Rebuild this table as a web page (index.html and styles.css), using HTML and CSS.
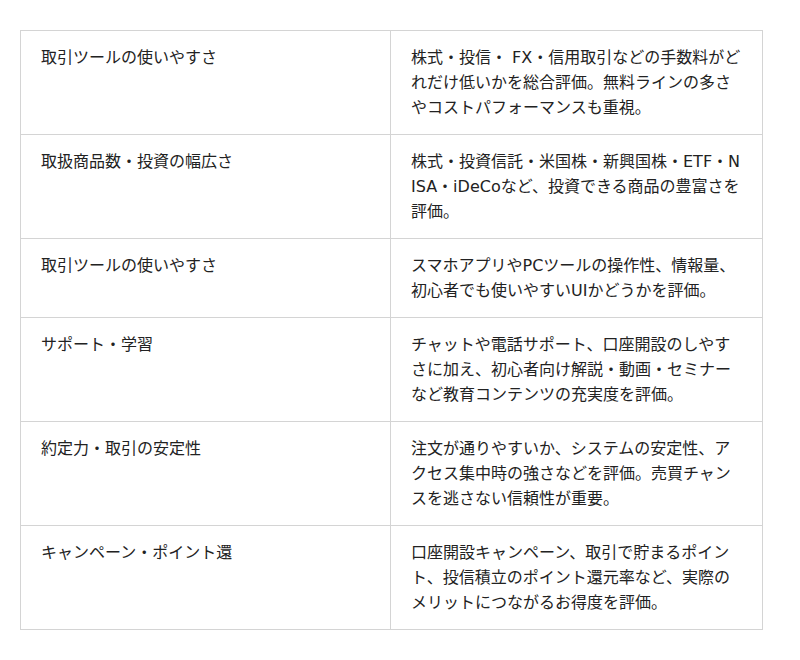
FILE: index.html
```html
<!DOCTYPE html>
<html lang="ja">
<head>
<meta charset="utf-8">
<link rel="stylesheet" href="styles.css">
</head>
<body>
<table class="criteria">
  <colgroup>
    <col class="col-name">
    <col class="col-desc">
  </colgroup>
  <tbody>
    <tr>
      <td>取引ツールの使いやすさ</td>
      <td>株式・投信・ FX・信用取引などの手数料がどれだけ低いかを総合評価。無料ラインの多さやコストパフォーマンスも重視。</td>
    </tr>
    <tr>
      <td>取扱商品数・投資の幅広さ</td>
      <td>株式・投資信託・米国株・新興国株・ETF・NISA・iDeCoなど、投資できる商品の豊富さを評価。</td>
    </tr>
    <tr>
      <td>取引ツールの使いやすさ</td>
      <td>スマホアプリやPCツールの操作性、情報量、初心者でも使いやすいUIかどうかを評価。</td>
    </tr>
    <tr>
      <td>サポート・学習</td>
      <td>チャットや電話サポート、口座開設のしやすさに加え、初心者向け解説・動画・セミナーなど教育コンテンツの充実度を評価。</td>
    </tr>
    <tr>
      <td>約定力・取引の安定性</td>
      <td>注文が通りやすいか、システムの安定性、アクセス集中時の強さなどを評価。売買チャンスを逃さない信頼性が重要。</td>
    </tr>
    <tr>
      <td>キャンペーン・ポイント還</td>
      <td>口座開設キャンペーン、取引で貯まるポイント、投信積立のポイント還元率など、実際のメリットにつながるお得度を評価。</td>
    </tr>
  </tbody>
</table>
</body>
</html>
```
FILE: styles.css
```css
html, body {
  margin: 0;
  padding: 0;
  background: #fff;
}
body {
  padding: 30px 20px;
  font-family: "DejaVu Sans", "Noto Sans CJK JP", sans-serif;
  font-size: 16px;
  line-height: 25px;
  color: #222;
}
.criteria {
  width: 742px;
  border-collapse: collapse;
  table-layout: fixed;
}
.col-name {
  width: 370px;
}
.col-desc {
  width: 372px;
}
.criteria td {
  border: 1px solid #d4d4d4;
  padding: 14px 20px;
  vertical-align: top;
  word-break: break-all;
}
```
